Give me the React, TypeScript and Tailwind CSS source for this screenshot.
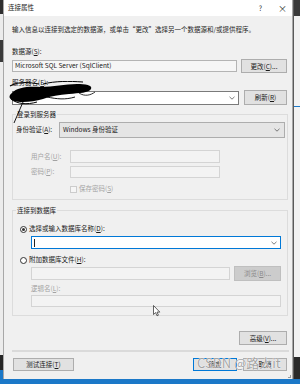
import React from 'react';

const Chevron = ({ className = '' }: { className?: string }) => (
  <svg width="6" height="4" viewBox="0 0 6 4" className={className}>
    <polyline points="0.5,0.8 3,3.2 5.5,0.8" fill="none" stroke="#5a5a5a" strokeWidth="0.8" />
  </svg>
);

function Btn({ children, className = '', disabled = false }: { children: React.ReactNode; className?: string; disabled?: boolean }) {
  return (
    <div
      className={`flex items-center justify-center border leading-none ${
        disabled ? 'bg-[#cccccc] border-[#bfbfbf] text-[#8a8a8a]' : 'bg-[#e1e1e1] border-[#adadad] text-[#1a1a1a]'
      } ${className}`}
    >
      {children}
    </div>
  );
}

export default function App() {
  return (
    <div className="w-[300px] h-[384px] flex flex-col overflow-hidden font-['Noto_Sans_CJK_SC',sans-serif] text-[6.5px] text-[#1a1a1a]">
      <div className="flex flex-1">
        {/* background window, left */}
        <div className="w-[3px] flex flex-col bg-[#ececec]">
          <div className="h-[14px] bg-[#2f2f2f]" />
          <div className="h-[26px]" />
          <div className="h-[22px] bg-[#3a3a3a]" />
          <div className="flex-1" />
          <div className="h-[15px] bg-[#262626]" />
          <div className="h-[9px] bg-[#1b78c8]" />
        </div>

        {/* dialog */}
        <div className="relative w-[290px] flex flex-col bg-[#f0f0f0] border-l border-r border-[#a8a8a8]">
          {/* title bar */}
          <div className="h-[16px] bg-white flex items-center pl-[4px] pr-[5px] text-[6.5px]">
            <span>连接属性</span>
            <span className="ml-auto mr-[16px] text-[7px] text-[#333]">?</span>
            <span className="text-[9px] leading-none text-[#333]">×</span>
          </div>

          <div className="flex flex-col pl-[8px] pr-[4px]">
            <div className="mt-[8px] h-[10px] leading-[10px] text-[#262626] whitespace-nowrap">
              输入信息以连接到选定的数据源，或单击“更改”选择另一个数据源和/或提供程序。
            </div>

            <div className="mt-[12px] h-[10px] leading-[10px]">数据源(<u>S</u>):</div>
            <div className="mt-[3px] h-[14px] flex items-center justify-between pr-[1px]">
              <div className="w-[225px] h-[12px] bg-[#f6f6f6] border border-[#b4b4b4] flex items-center pl-[2px] text-[6.5px]">
                Microsoft SQL Server (SqlClient)
              </div>
              <Btn className="w-[46px] h-[14px]">更改(<u>C</u>)...</Btn>
            </div>

            <div className="mt-[4px] h-[10px] leading-[10px]">服务器名(<u>E</u>):</div>
            <div className="mt-[3px] h-[15px] flex items-center justify-between pr-[1px]">
              <div className="w-[227px] h-[14px] bg-white border border-[#7a7a7a] flex items-center justify-end pr-[3px]">
                <Chevron />
              </div>
              <Btn className="w-[43px] h-[15px]">刷新(<u>R</u>)</Btn>
            </div>

            {/* login group */}
            <fieldset className="mt-[4px] h-[91px] border border-[#dcdcdc] flex flex-col">
              <legend className="ml-[3px] px-[1px] h-[10px] leading-[10px]">登录到服务器</legend>
              <div className="mt-[3px] h-[16px] flex items-center pl-[3px]">
                <span className="w-[43px]">身份验证(<u>A</u>):</span>
                <div className="w-[226px] h-[16px] bg-[#e5e5e5] border border-[#adadad] flex items-center pl-[3px] pr-[4px]">
                  <span className="text-[6.5px]">Windows 身份验证</span>
                  <Chevron className="ml-auto" />
                </div>
              </div>
              <div className="mt-[12px] h-[13px] flex items-center pl-[18px] text-[#a3a3a3]">
                <span className="w-[39px]">用户名(<u>U</u>):</span>
                <div className="w-[150px] h-[13px] bg-[#f3f3f3] border border-[#d4d4d4]" />
              </div>
              <div className="mt-[3px] h-[12px] flex items-center pl-[18px] text-[#a3a3a3]">
                <span className="w-[39px]">密码(<u>P</u>):</span>
                <div className="w-[150px] h-[12px] bg-[#f3f3f3] border border-[#d4d4d4]" />
              </div>
              <div className="mt-[7px] h-[8px] flex items-center pl-[57px] text-[#a3a3a3]">
                <div className="w-[7px] h-[7px] bg-[#f6f6f6] border border-[#cccccc]" />
                <span className="ml-[2px]">保存密码(<u>S</u>)</span>
              </div>
            </fieldset>

            {/* database group */}
            <fieldset className="mt-[5px] h-[111px] border border-[#dcdcdc] flex flex-col">
              <legend className="ml-[3px] px-[1px] h-[10px] leading-[10px]">连接到数据库</legend>
              <div className="mt-[9px] h-[10px] flex items-center pl-[7px]">
                <div className="w-[7px] h-[7px] rounded-full border border-[#333] bg-white flex items-center justify-center">
                  <div className="w-[3px] h-[3px] rounded-full bg-[#333]" />
                </div>
                <span className="ml-[2px]">选择或输入数据库名称(<u>D</u>):</span>
              </div>
              <div className="mt-[2px] h-[13px] ml-[18px] w-[250px] bg-white border border-[#0078d7] flex items-center pl-[2px] pr-[3px]">
                <div className="w-px h-[8px] bg-[#222]" />
                <Chevron className="ml-auto" />
              </div>
              <div className="mt-[6px] h-[10px] flex items-center pl-[7px]">
                <div className="w-[7px] h-[7px] rounded-full border border-[#333] bg-white" />
                <span className="ml-[2px]">附加数据库文件(<u>H</u>):</span>
              </div>
              <div className="mt-[1px] h-[15px] flex items-center pl-[18px]">
                <div className="w-[199px] h-[13px] bg-[#f3f3f3] border border-[#d4d4d4]" />
                <Btn disabled className="ml-[4px] w-[47px] h-[15px]">浏览(<u>B</u>)...</Btn>
              </div>
              <div className="mt-[2px] h-[10px] leading-[10px] pl-[18px] text-[#a3a3a3]">逻辑名(<u>L</u>):</div>
              <div className="mt-[2px] h-[12px] ml-[18px] w-[250px] bg-[#f3f3f3] border border-[#d4d4d4]" />
            </fieldset>

            <div className="mt-[15px] flex justify-end pr-[1px]">
              <Btn className="w-[48px] h-[14px]">高级(<u>V</u>)...</Btn>
            </div>
            <div className="mt-[5px] h-[2px] bg-[#dadada] mr-[-1px]" />
            <div className="mt-[6px] h-[13px] flex items-center pl-[1px] pr-[1px]">
              <Btn className="w-[61px] h-[13px]">测试连接(<u>T</u>)</Btn>
              <Btn className="ml-auto w-[44px] h-[13px] !border-[#0078d7]">确定</Btn>
              <Btn className="ml-[6px] w-[44px] h-[13px]">取消</Btn>
            </div>
          </div>

          {/* redaction scribble */}
          <svg className="absolute left-[3px] top-[81px]" width="92" height="46" viewBox="0 0 92 46">
            <path
              d="M5 12 C10 6 22 5 34 6 C46 6 58 3 70 3 C78 3 86 4 84 8 C82 12 72 12 62 13 C52 14 44 15 36 18 C26 21 14 22 7 20 C2 18 1 15 5 12 Z"
              fill="#000"
            />
            <path d="M3 5 C10 1 22 1 32 3" stroke="#000" strokeWidth="1.2" fill="none" />
            <path d="M36 3 C48 0 62 0 76 1" stroke="#000" strokeWidth="1" fill="none" />
            <path d="M4 18 C10 23 20 24 30 21" stroke="#000" strokeWidth="1" fill="none" />
            <path d="M16 21 L7 42" stroke="#000" strokeWidth="0.9" fill="none" />
            <path d="M40 16 C50 18 58 19 68 16" stroke="#000" strokeWidth="0.9" fill="none" />
            <path d="M72 12 C78 16 84 14 88 11" stroke="#000" strokeWidth="0.8" fill="none" />
          </svg>

          {/* mouse pointer */}
          <svg className="absolute left-[149px] top-[305px]" width="8" height="12" viewBox="0 0 8 12">
            <path d="M0.5 0.5 L0.5 9.5 L2.6 7.6 L4 10.8 L5.4 10.2 L4 7.1 L6.8 7.1 Z" fill="#fff" stroke="#222" strokeWidth="0.7" />
          </svg>

          {/* watermark */}
          <div className="absolute left-[193px] top-[354px] text-[13px] leading-[18px] text-[#8c8c8c]/80 [text-shadow:0_0_1px_#fff,0_0_1px_#fff] whitespace-nowrap">
            CSDN @路人it
          </div>

          {/* resize grip */}
          <div className="absolute right-[1px] bottom-[1px] w-[3px] h-[3px] border-r border-b border-[#9a9a9a]" />
        </div>

        {/* background window, right */}
        <div className="w-[7px] flex flex-col bg-[#f2f2f2] border-l border-[#5a5a5a]">
          <div className="h-[16px] bg-[#3a3a3a]" />
          <div className="h-[90px]" />
          <div className="h-px bg-[#1b78c8]" />
          <div className="flex-1" />
          <div className="h-[22px] bg-[#2a2a2a]" />
        </div>
      </div>
      <div className="h-[5px] bg-[#1b78c8]" />
    </div>
  );
}
